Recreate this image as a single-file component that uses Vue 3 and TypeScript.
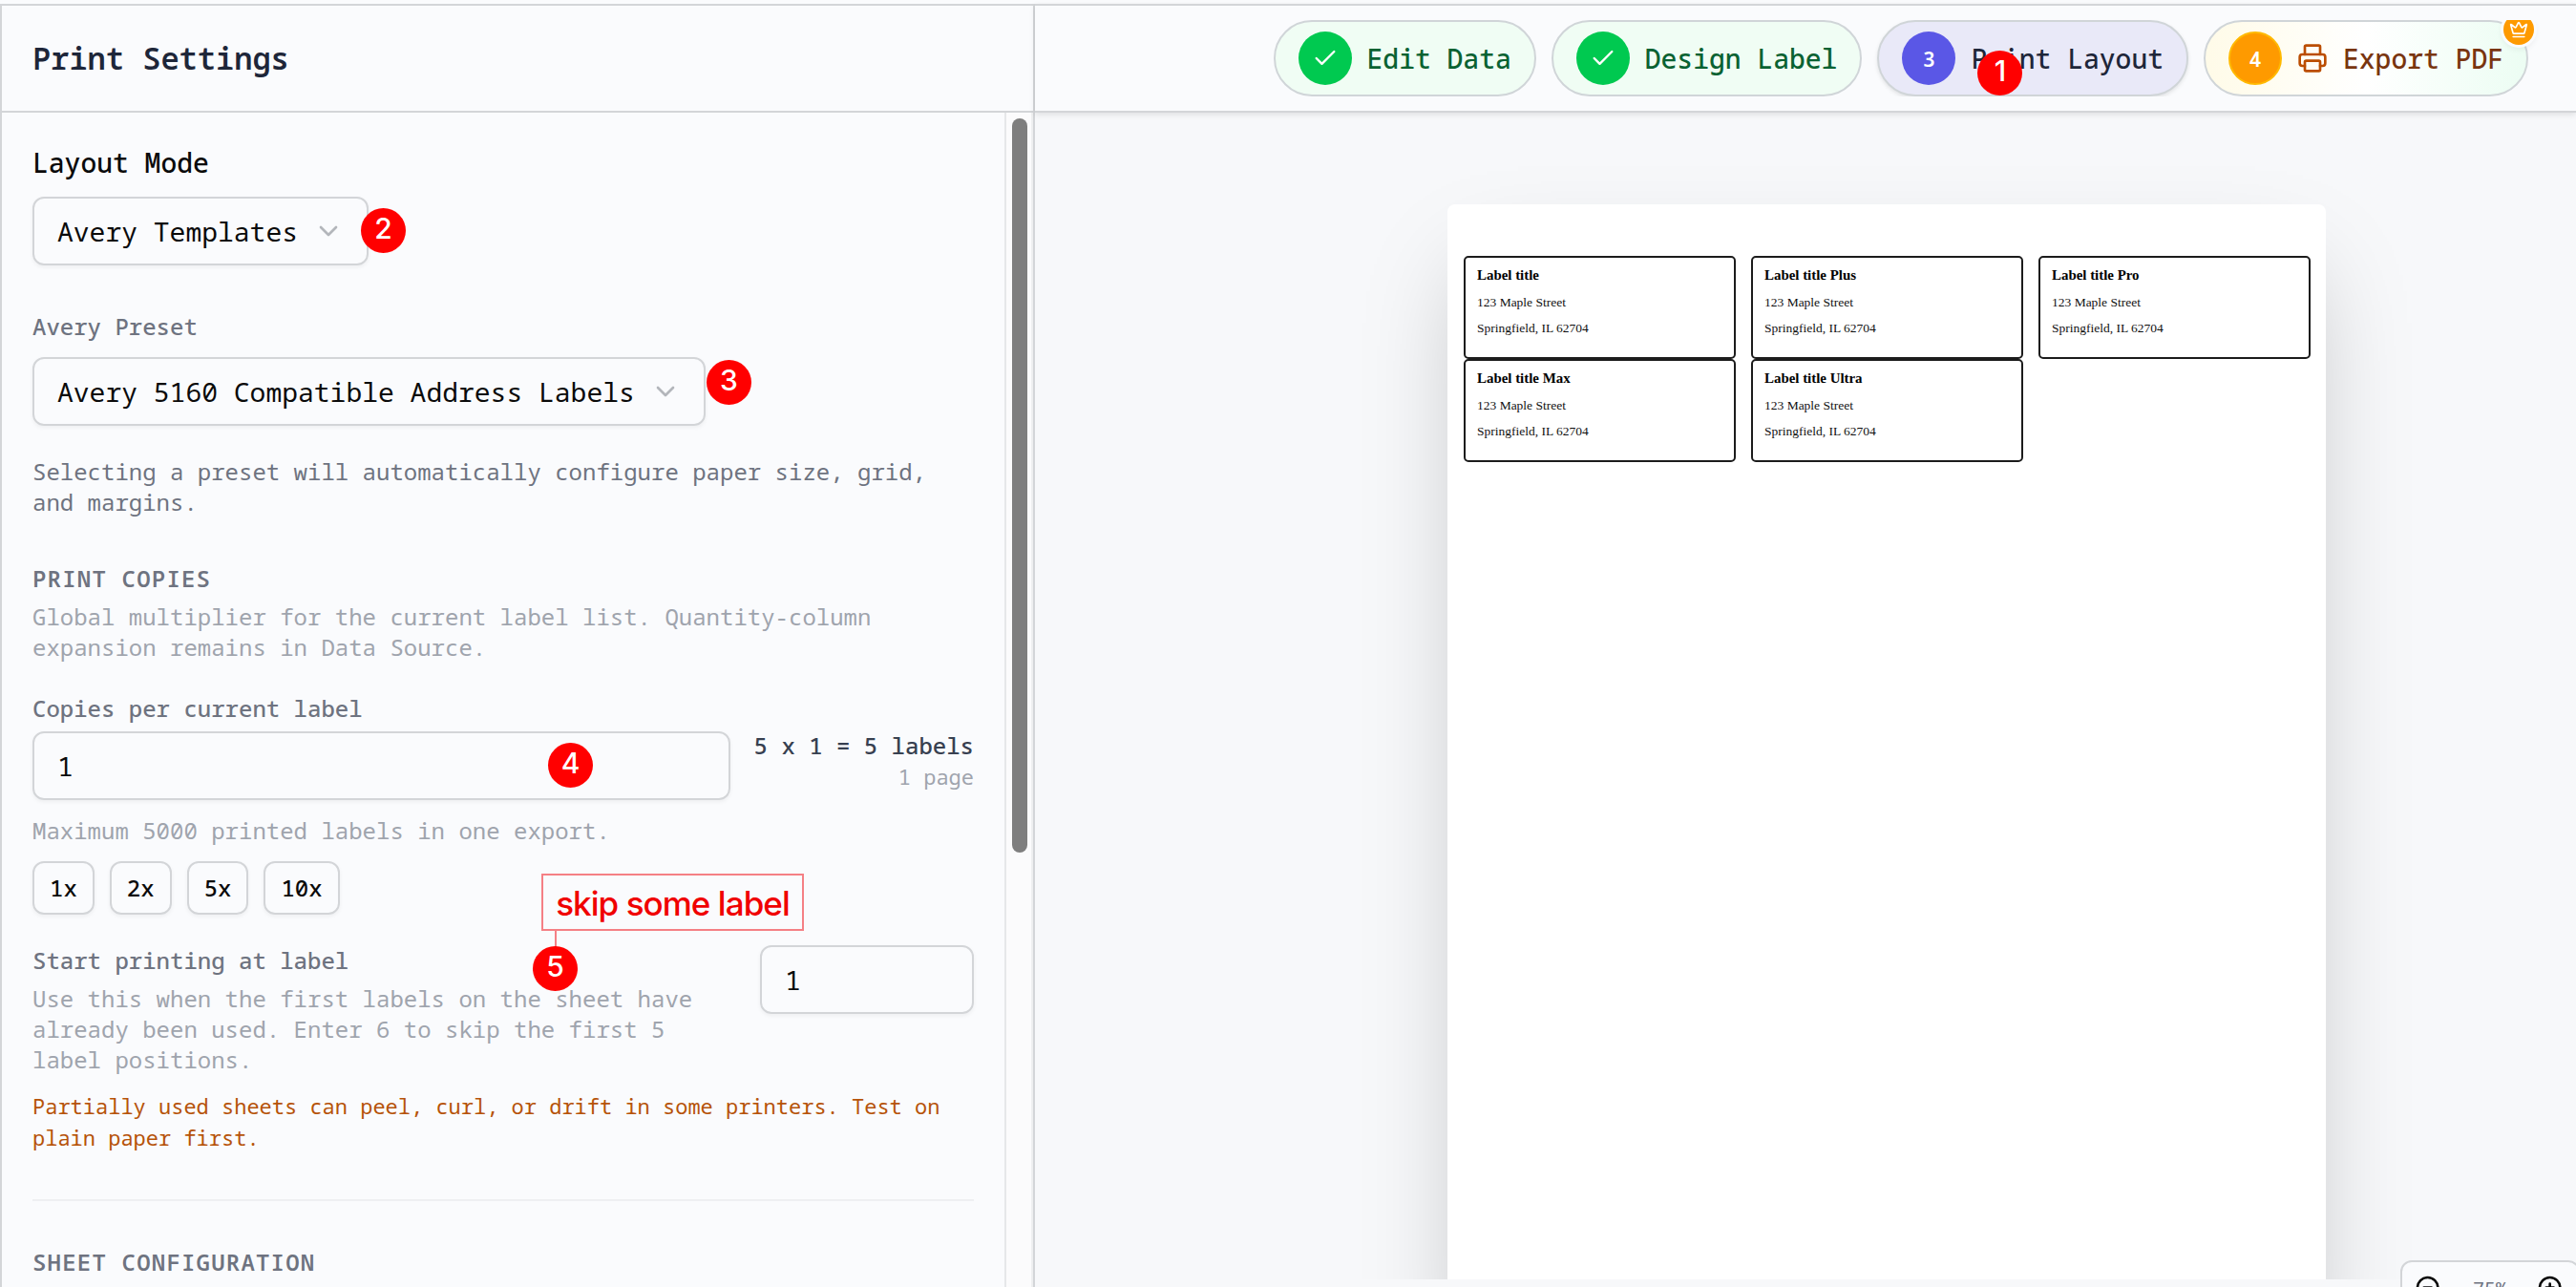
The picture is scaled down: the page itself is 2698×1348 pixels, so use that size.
<script setup lang="ts">
interface Label {
  title: string
}

const labels: Label[] = [
  { title: 'Label title' },
  { title: 'Label title Plus' },
  { title: 'Label title Pro' },
  { title: 'Label title Max' },
  { title: 'Label title Ultra' },
]

const multipliers: number[] = [1, 2, 5, 10]
const doneSteps: string[] = ['Edit Data', 'Design Label']
</script>

<template>
  <div class="app">
    <aside class="settings">
      <header class="settings-head">Print Settings</header>
      <div class="settings-body">
        <div class="form">
          <div class="label-lg">Layout Mode</div>
          <div class="select">
            <span>Avery Templates</span>
            <svg class="chev" viewBox="0 0 24 24"><path d="m6 9 6 6 6-6" /></svg>
            <i class="pin pin2">2</i>
          </div>
          <div class="label med avery">Avery Preset</div>
          <div class="select">
            <span>Avery 5160 Compatible Address Labels</span>
            <svg class="chev" viewBox="0 0 24 24"><path d="m6 9 6 6 6-6" /></svg>
            <i class="pin pin3">3</i>
          </div>
          <p class="hint">Selecting a preset will automatically configure paper size, grid,<br />and margins.</p>

          <h3 class="section">PRINT COPIES</h3>
          <p class="muted">Global multiplier for the current label list. Quantity-column<br />expansion remains in Data Source.</p>
          <div class="label med copies">Copies per current label</div>
          <div class="row">
            <div class="input grow">1<i class="pin pin4">4</i></div>
            <div class="summary">
              <div class="sum-main">5 x 1 = 5 labels</div>
              <div class="sum-sub">1 page</div>
            </div>
          </div>
          <p class="muted max">Maximum 5000 printed labels in one export.</p>
          <div class="chips">
            <div v-for="m in multipliers" :key="m" class="chip">{{ m }}x</div>
          </div>
          <div class="start">
            <div class="start-text">
              <div class="label med">Start printing at label</div>
              <p class="muted use">Use this when the first labels on the sheet have<br />already been used. Enter 6 to skip the first 5<br />label positions.</p>
              <div class="note">skip some label</div>
              <i class="pin pin5">5</i>
            </div>
            <div class="input small">1</div>
          </div>
          <p class="warn">Partially used sheets can peel, curl, or drift in some printers. Test on<br />plain paper first.</p>
          <div class="divider"></div>
          <h3 class="section sheet">SHEET CONFIGURATION</h3>
        </div>
        <div class="track"><div class="thumb"></div></div>
      </div>
    </aside>

    <main class="preview">
      <header class="steps">
        <div class="steps-row">
          <div v-for="s in doneSteps" :key="s" class="pill done">
            <span class="dot green">
              <svg viewBox="0 0 24 24"><path d="M20 6 9 17l-5-5" /></svg>
            </span>
            <span>{{ s }}</span>
          </div>
          <div class="pill active">
            <span class="dot indigo">3</span>
            <span>Print Layout</span>
            <i class="pin pin1">1</i>
          </div>
          <div class="pill export">
            <span class="dot amber">4</span>
            <svg class="printer" viewBox="0 0 24 24">
              <path d="M6 18H4a2 2 0 0 1-2-2v-5a2 2 0 0 1 2-2h16a2 2 0 0 1 2 2v5a2 2 0 0 1-2 2h-2" />
              <path d="M6 9V3a1 1 0 0 1 1-1h10a1 1 0 0 1 1 1v6" />
              <rect x="6" y="14" width="12" height="8" rx="1" />
            </svg>
            <span>Export PDF</span>
            <span class="crown">
              <svg viewBox="0 0 24 24">
                <path d="M11.562 3.266a.5.5 0 0 1 .876 0L15.39 8.87a1 1 0 0 0 1.516.294L21.183 5.5a.5.5 0 0 1 .798.519l-2.834 10.246a1 1 0 0 1-.956.734H5.81a1 1 0 0 1-.957-.734L2.02 6.02a.5.5 0 0 1 .798-.519l4.276 3.664a1 1 0 0 0 1.516-.294z" />
                <path d="M5 21h14" />
              </svg>
            </span>
          </div>
        </div>
      </header>
      <div class="canvas">
        <div class="paper">
          <div v-for="l in labels" :key="l.title" class="card">
            <b>{{ l.title }}</b>
            <span>123 Maple Street</span>
            <span>Springfield, IL 62704</span>
          </div>
        </div>
      </div>
      <div class="zoombar">
        <svg viewBox="0 0 24 24"><circle cx="11" cy="11" r="8" /><path d="m21 21-4.35-4.35M8 11h6" /></svg>
        <span>75%</span>
        <svg viewBox="0 0 24 24"><circle cx="11" cy="11" r="8" /><path d="m21 21-4.35-4.35M11 8v6M8 11h6" /></svg>
      </div>
    </main>
  </div>
</template>

<style>
body {
  margin: 0;
  overflow: hidden;
}
</style>

<style scoped>
.app {
  box-sizing: border-box;
  width: 2698px;
  height: 1348px;
  padding-top: 4px;
  background: #fafbfd;
  display: flex;
  overflow: hidden;
  font-family: 'Noto Sans Mono', 'DejaVu Sans Mono', monospace;
  font-size: 28px;
  color: #0a0a0a;
}
.app * {
  box-sizing: border-box;
}
p,
h3 {
  margin: 0;
}
svg {
  fill: none;
  stroke: currentColor;
  stroke-width: 2;
  stroke-linecap: round;
  stroke-linejoin: round;
  display: block;
  flex: none;
}
.settings {
  width: 1084px;
  flex: none;
  border: 2px solid #d3d5d8;
  border-bottom: 0;
  display: flex;
  flex-direction: column;
}
.settings-head {
  height: 112px;
  flex: none;
  border-bottom: 2px solid #d3d5d8;
  padding: 0 32px;
  line-height: 110px;
  font-size: 32px;
  font-weight: 600;
  color: #1e2639;
}
.settings-body {
  flex: 1;
  display: flex;
  min-height: 0;
}
.form {
  flex: 1;
  padding: 32px 32px 0 32px;
  display: flex;
  flex-direction: column;
  align-items: flex-start;
}
.track {
  width: 30px;
  background: #fbfbfc;
  border-left: 2px solid #e6e7e9;
  border-right: 2px solid #eeeff0;
  padding: 6px 4px 0 6px;
}
.thumb {
  width: 16px;
  height: 769px;
  border-radius: 8px;
  background: #7e7e7e;
}
.label-lg {
  height: 40px;
  line-height: 40px;
  font-weight: 500;
  margin-bottom: 16px;
}
.label {
  font-size: 24px;
  line-height: 32px;
  height: 32px;
  color: #6e7380;
}
.med {
  font-weight: 500;
}
.avery {
  margin: 48px 0 16px;
}
.select,
.input {
  position: relative;
  height: 72px;
  border: 2px solid #d3d5d8;
  border-radius: 12px;
  padding: 0 24px;
  display: flex;
  align-items: center;
  gap: 16px;
  box-shadow: 0 2px 4px rgba(0, 0, 0, 0.05);
  white-space: pre;
}
.chev {
  width: 32px;
  height: 32px;
  color: #b3b6bb;
}
.hint {
  margin-top: 32px;
  font-size: 24px;
  line-height: 32px;
  color: #6e7380;
}
.section {
  font-size: 24px;
  line-height: 32px;
  font-weight: 600;
  letter-spacing: 1.2px;
  color: #6e7380;
  margin-top: 48px;
}
.muted {
  font-size: 24px;
  line-height: 32px;
  color: #9fa4ad;
  margin-top: 8px;
  white-space: nowrap;
}
.copies {
  margin: 32px 0 8px;
}
.row {
  display: flex;
  gap: 25px;
  align-self: stretch;
}
.grow {
  flex: 1;
}
.summary {
  text-align: right;
  white-space: nowrap;
  margin-top: -1px;
}
.sum-main {
  font-size: 24px;
  line-height: 32px;
  font-weight: 500;
  color: #374050;
}
.sum-sub {
  font-size: 22px;
  line-height: 33px;
  color: #9fa4ad;
}
.max {
  margin-top: 16px;
}
.chips {
  display: flex;
  gap: 16px;
  margin-top: 16px;
}
.chip {
  height: 56px;
  line-height: 52px;
  padding: 0 16px;
  border: 2px solid #d3d5d8;
  border-radius: 12px;
  font-size: 24px;
  font-weight: 500;
  box-shadow: 0 2px 4px rgba(0, 0, 0, 0.05);
}
.start {
  align-self: stretch;
  display: flex;
  justify-content: space-between;
  margin-top: 32px;
}
.start-text {
  position: relative;
}
.small {
  width: 224px;
}
.warn {
  margin-top: 16px;
  font-size: 22px;
  line-height: 33px;
  color: #b65309;
  white-space: nowrap;
}
.divider {
  align-self: stretch;
  height: 2px;
  background: #eeeff2;
  margin-top: 48px;
}
.sheet {
  margin-top: 48px;
}
/* numbered callouts float above the interface */
.pin {
  position: absolute;
  z-index: 5;
  width: 47px;
  height: 47px;
  border-radius: 50%;
  background: #f00;
  color: #fff;
  font: normal 450 30px/43px Inter, 'Liberation Sans', sans-serif;
  text-align: center;
}
.pin1 {
  left: 103px;
  top: 30px;
}
.pin2 {
  left: 342px;
  top: 10px;
}
.pin3 {
  left: 704px;
  top: 1px;
}
.pin4 {
  left: 538px;
  top: 10px;
}
.pin5 {
  left: 524px;
  top: 1px;
}
.note {
  position: absolute;
  left: 533px;
  top: -75px;
  width: 275px;
  height: 60px;
  border: 2px solid #f58085;
  color: #f00000;
  font: 500 35px/58px Inter, 'Liberation Sans', sans-serif;
  letter-spacing: -0.95px;
  text-align: center;
  white-space: nowrap;
}
.note::after {
  content: '';
  position: absolute;
  left: 12px;
  top: 56px;
  width: 2px;
  height: 20px;
  background: #f58085;
}
.preview {
  position: relative;
  flex: 1;
  display: flex;
  flex-direction: column;
  min-width: 0;
  background: #f7f8fa;
}
.steps {
  position: relative;
  z-index: 2;
  height: 114px;
  flex: none;
  border-top: 2px solid #d3d5d8;
  border-bottom: 2px solid #d3d5d8;
  background: #fafbfd;
  box-shadow: 0 2px 6px rgba(0, 0, 0, 0.1);
  display: flex;
  justify-content: flex-end;
  align-items: center;
}
/* clips the part of the crown badge that overhangs the row */
.steps-row {
  display: flex;
  gap: 16px;
  padding-right: 50px;
  overflow: hidden;
}
.pill {
  position: relative;
  height: 80px;
  border: 2px solid #d0d5d8;
  border-radius: 40px;
  padding: 0 24px;
  display: flex;
  align-items: center;
  gap: 16px;
  font-weight: 500;
  white-space: nowrap;
}
.done {
  background: #f0fdf4;
  color: #0a6232;
}
.active {
  background: #e9e9f8;
  color: #1e2639;
  box-shadow: 0 2px 4px rgba(0, 0, 0, 0.1);
}
.export {
  background: linear-gradient(90deg, #fffbe8, #ffffff 50%, #ecfdf3);
  color: #79350f;
}
.dot {
  width: 56px;
  height: 56px;
  border-radius: 50%;
  display: flex;
  align-items: center;
  justify-content: center;
  color: #fff;
  font-size: 22px;
  font-weight: 600;
}
.dot svg {
  width: 28px;
  height: 28px;
}
.green {
  background: #00c950;
}
.indigo {
  background: #5a57e6;
}
.amber {
  background: #fe9a00;
  border: 2px solid #ffb900;
}
.printer {
  width: 32px;
  height: 32px;
  color: #bb4d00;
}
.crown {
  position: absolute;
  right: -8px;
  top: -8px;
  width: 32px;
  height: 32px;
  border-radius: 50%;
  background: #fe9a00;
  color: #fff;
  display: flex;
  align-items: center;
  justify-content: center;
  box-shadow: 0 0 0 3px #fafbfd, 0 3px 6px 2px rgba(0, 0, 0, 0.06);
}
.crown svg {
  width: 20px;
  height: 20px;
}
.canvas {
  flex: 1;
  margin-bottom: 8px;
  display: flex;
  justify-content: center;
  overflow: hidden;
  padding: 96px 0 0 170px;
}
.paper {
  width: 920px;
  flex: none;
  background: #fff;
  border-radius: 8px 8px 0 0;
  padding: 54px 16px 0 17px;
  box-shadow: 0 50px 100px -24px rgba(0, 0, 0, 0.25);
  display: grid;
  grid-template-columns: repeat(3, 285px);
  grid-auto-rows: 108.2px;
  column-gap: 16px;
  align-content: start;
  height: 1190px;
}
.card {
  border: 2px solid #1c1c1c;
  border-radius: 5px;
  padding: 5px 12px;
  display: flex;
  flex-direction: column;
  font-family: 'Liberation Serif', serif;
  font-size: 13.5px;
  line-height: 27.5px;
  color: #111;
}
.card b {
  font-size: 14.9px;
  color: #000;
}
.zoombar {
  position: absolute;
  z-index: 3;
  left: 1430px;
  top: 1316px;
  width: 188px;
  height: 60px;
  border: 2px solid #d3d5d8;
  border-radius: 12px;
  background: #fafbfd;
  color: #0a0a0a;
  display: flex;
  align-items: flex-start;
  padding: 12px;
}
.zoombar svg {
  width: 32px;
  height: 32px;
}
.zoombar span {
  width: 96px;
  text-align: center;
  font-size: 20px;
  line-height: 32px;
  color: #6e7380;
}
</style>
